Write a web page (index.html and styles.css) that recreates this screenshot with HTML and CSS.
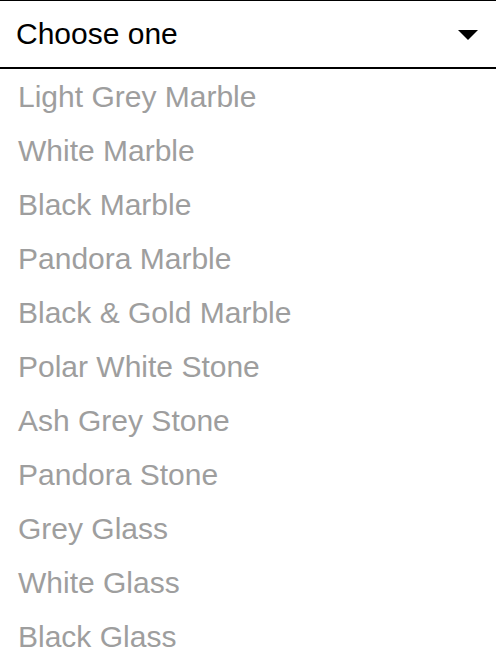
FILE: index.html
```html
<!DOCTYPE html>
<html lang="en">
<head>
    <meta charset="UTF-8">
    <meta name="viewport" content="width=device-width, initial-scale=1.0">
    <title>Choose a finish</title>
    <link rel="stylesheet" href="styles.css">
</head>
<body>
    <div class="dropdown">
        <div class="dropdown-toggle">
            <span class="dropdown-label">Choose one</span>
            <svg class="caret" width="20" height="10" viewBox="0 0 20 10">
                <polygon points="0,0 20,0 10,10" fill="#000"/>
            </svg>
        </div>
        <ul class="dropdown-menu">
            <li>Light Grey Marble</li>
            <li>White Marble</li>
            <li>Black Marble</li>
            <li>Pandora Marble</li>
            <li>Black &amp; Gold Marble</li>
            <li>Polar White Stone</li>
            <li>Ash Grey Stone</li>
            <li>Pandora Stone</li>
            <li>Grey Glass</li>
            <li>White Glass</li>
            <li>Black Glass</li>
        </ul>
    </div>
</body>
</html>
```

FILE: styles.css
```css
body {
    margin: 0;
    background-color: #fff;
    font-family: "Liberation Sans", Arial, sans-serif;
}
.dropdown {
    width: 100%;
}
.dropdown-toggle {
    display: flex;
    align-items: center;
    justify-content: space-between;
    height: 66px;
    padding: 0 18px 0 16px;
    border-top: 1px solid #000;
    border-bottom: 2px solid #000;
    font-size: 30px;
    color: #000;
}
.dropdown-toggle .caret {
    display: block;
    margin-top: 2px;
}
.dropdown-menu {
    list-style: none;
    margin: 0;
    padding: 1px 0 0;
}
.dropdown-menu li {
    padding: 0 18px;
    line-height: 54px;
    font-size: 30px;
    color: #9e9e9e;
}
```
